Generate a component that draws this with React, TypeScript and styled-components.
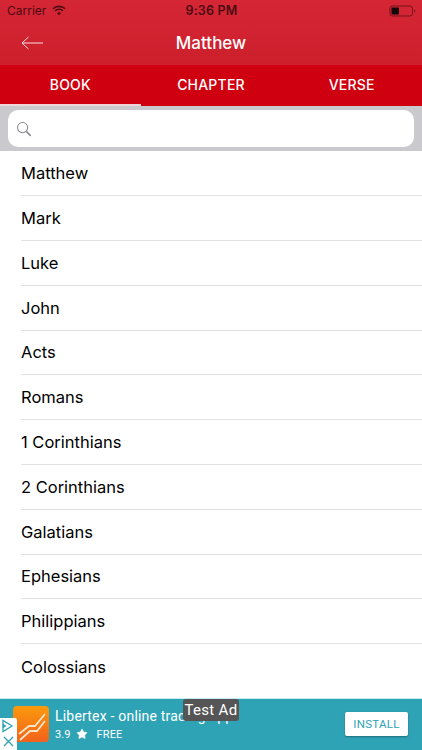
import React from 'react';
import styled, { createGlobalStyle } from 'styled-components';
import { Star } from 'lucide-react';

const GlobalStyle = createGlobalStyle`
  html, body {
    margin: 0;
    padding: 0;
    background: #fff;
    overflow: hidden;
  }
  * { box-sizing: border-box; }
`;

const Screen = styled.div`
  width: 422px;
  height: 750px;
  display: flex;
  flex-direction: column;
  overflow: hidden;
  font-family: Inter, "Liberation Sans", sans-serif;
  background: #fff;
`;

const Header = styled.header`
  height: 65px;
  flex: none;
  background: linear-gradient(180deg, #d52636 0%, #cc1f2b 100%);
`;

const StatusBar = styled.div`
  height: 21px;
  padding: 0 6px 0 7px;
  display: grid;
  grid-template-columns: 1fr auto 1fr;
  align-items: center;
  font-size: 12px;
  color: #4b0c12;
`;

const Carrier = styled.div`
  display: flex;
  align-items: center;
  gap: 6px;
`;

const Clock = styled.div`
  font-weight: 600;
  font-size: 12.5px;
  letter-spacing: 0.2px;
`;

const BatteryWrap = styled.div`
  justify-self: end;
  display: flex;
  align-items: center;
`;

const NavBar = styled.div`
  height: 44px;
  padding: 0 21px;
  display: grid;
  grid-template-columns: 1fr auto 1fr;
  align-items: center;
`;

const NavTitle = styled.div`
  color: #fff;
  font-size: 17px;
  font-weight: 500;
`;

const Tabs = styled.nav`
  height: 41px;
  flex: none;
  display: grid;
  grid-template-columns: repeat(3, 1fr);
  background: #cf000f;
`;

const Tab = styled.div<{ $active?: boolean }>`
  display: flex;
  align-items: center;
  justify-content: center;
  padding-bottom: 1px;
  color: #fff;
  font-size: 14px;
  font-weight: 500;
  letter-spacing: 0.2px;
  border-bottom: 2px solid ${({ $active }) => ($active ? '#f0d5d8' : '#cf000f')};
`;

const SearchBar = styled.div`
  height: 45px;
  flex: none;
  padding: 4px 8px 4px 8px;
  background: #c9c9ce;
`;

const SearchField = styled.div`
  height: 37px;
  padding-left: 8px;
  display: flex;
  align-items: center;
  background: #fff;
  border-radius: 10px;
`;

const BookList = styled.ul`
  flex: 1;
  min-height: 0;
  margin: 0;
  padding: 0.4px 0 0;
  list-style: none;
  overflow: hidden;
`;

const BookRow = styled.li`
  height: 44.8px;
  margin-left: 21px;
  display: flex;
  align-items: center;
  color: #000;
  font-size: 16.5px;
  border-bottom: 1px solid #e2e2e4;

  &:last-child {
    border-bottom: none;
  }
`;

const AdBanner = styled.div`
  position: relative;
  height: 52px;
  flex: none;
  padding: 1px 13px 3px;
  display: flex;
  align-items: center;
  background: #2ea3b6;
  border-top: 1px solid #c5edf1;
  font-family: Roboto, "Liberation Sans", sans-serif;
  color: #fff;
`;

const AdLogo = styled.div`
  width: 36px;
  height: 36px;
  flex: none;
  margin-right: 6px;
  border-radius: 4px;
  background: linear-gradient(180deg, #fb9a0c 0%, #f2621c 100%);
  overflow: hidden;
`;

const AdText = styled.div`
  flex: 1;
  min-width: 0;
  display: flex;
  flex-direction: column;
  gap: 3px;
`;

const AdTitle = styled.div`
  font-size: 14px;
  line-height: 18px;
  letter-spacing: 0.2px;
  white-space: nowrap;
`;

const AdMeta = styled.div`
  display: flex;
  align-items: center;
  font-size: 11px;
  letter-spacing: 0.1px;
`;

const AdRating = styled.span`
  margin-right: 5px;
`;

const AdPrice = styled.span`
  margin-left: 9px;
`;

const InstallButton = styled.div`
  width: 63px;
  height: 24px;
  flex: none;
  margin-right: 1px;
  display: flex;
  align-items: center;
  justify-content: center;
  background: #fff;
  border-radius: 2px;
  box-shadow: 0 1px 2px rgba(0, 0, 0, 0.35);
  color: #2ea3b6;
  font-size: 11.5px;
  letter-spacing: 0.3px;
`;

const AdChoices = styled.div`
  position: absolute;
  left: 0;
  bottom: 0;
  width: 17px;
  height: 32px;
  background: #fff;
  border-radius: 0 2px 0 0;
`;

const TestBadge = styled.div`
  position: absolute;
  left: 183px;
  top: 0;
  width: 56px;
  height: 22px;
  display: flex;
  align-items: center;
  justify-content: center;
  background: #555;
  border-radius: 3px;
  color: #fff;
  font-size: 15px;
  letter-spacing: 0.3px;
`;

const books = [
  'Matthew',
  'Mark',
  'Luke',
  'John',
  'Acts',
  'Romans',
  '1 Corinthians',
  '2 Corinthians',
  'Galatians',
  'Ephesians',
  'Philippians',
  'Colossians',
];

const App: React.FC = () => {
  return (
    <Screen>
      <GlobalStyle />
      <Header>
        <StatusBar>
          <Carrier>
            Carrier
            <svg width="14" height="11" viewBox="0 0 15 11" fill="none" stroke="#4b0c12" strokeWidth="1.7">
              <path d="M1 3.6C4.6.3 10.4.3 14 3.6" />
              <path d="M3.3 5.9c2.4-2.1 6-2.1 8.4 0" />
              <path d="M7.5 10.6 5.3 8.1c1.3-1 3.1-1 4.4 0z" fill="#4b0c12" stroke="none" />
            </svg>
          </Carrier>
          <Clock>9:36 PM</Clock>
          <BatteryWrap>
            <svg width="27" height="12" viewBox="0 0 27 12" fill="none">
              <rect x="1" y="1" width="22.5" height="10" rx="2.5" stroke="#4b0c12" strokeOpacity="0.7" />
              <rect x="2.5" y="2.5" width="7.5" height="7" rx="1" fill="#14060a" />
              <path d="M25 4.2c.8.3 1.2.9 1.2 1.8s-.4 1.5-1.2 1.8z" fill="#4b0c12" fillOpacity="0.6" />
            </svg>
          </BatteryWrap>
        </StatusBar>
        <NavBar>
          <svg width="22" height="14" viewBox="0 0 22 14" fill="none" stroke="#f7dfe1" strokeWidth="1">
            <path d="M22 7H1" />
            <path d="M7.5 1 1 7l6.5 6" />
          </svg>
          <NavTitle>Matthew</NavTitle>
        </NavBar>
      </Header>
      <Tabs>
        <Tab $active>BOOK</Tab>
        <Tab>CHAPTER</Tab>
        <Tab>VERSE</Tab>
      </Tabs>
      <SearchBar>
        <SearchField>
          <svg width="16" height="16" viewBox="0 0 17 17" fill="none" stroke="#8b8b8f">
            <circle cx="7" cy="7" r="5.4" strokeWidth="1.1" />
            <path d="m11 11 4.6 4.8" strokeWidth="1.7" />
          </svg>
        </SearchField>
      </SearchBar>
      <BookList>
        {books.map((book) => (
          <BookRow key={book}>{book}</BookRow>
        ))}
      </BookList>
      <AdBanner>
        <AdLogo>
          <svg width="36" height="36" viewBox="0 0 36 36" fill="none" stroke="#fde3c8" strokeWidth="1.8">
            <path d="M6 28 16 20h6L32 8" />
            <path d="M7 34 17 25h7l8-10" />
          </svg>
        </AdLogo>
        <AdText>
          <AdTitle>Libertex - online trading app</AdTitle>
          <AdMeta>
            <AdRating>3.9</AdRating>
            <Star size={12} fill="#fff" strokeWidth={1} />
            <AdPrice>FREE</AdPrice>
          </AdMeta>
        </AdText>
        <InstallButton>INSTALL</InstallButton>
        <AdChoices>
          <svg width="17" height="32" viewBox="0 0 17 32" fill="none" stroke="#2ea3b6" strokeWidth="1.3">
            <path d="M3 2.5v11l9-5.5z" />
            <path d="M3 6v4l3.2-2z" fill="#2ea3b6" strokeWidth="0.5" />
            <path d="m4 19 9 9M13 19l-9 9" />
          </svg>
        </AdChoices>
        <TestBadge>Test Ad</TestBadge>
      </AdBanner>
    </Screen>
  );
};

export default App;
